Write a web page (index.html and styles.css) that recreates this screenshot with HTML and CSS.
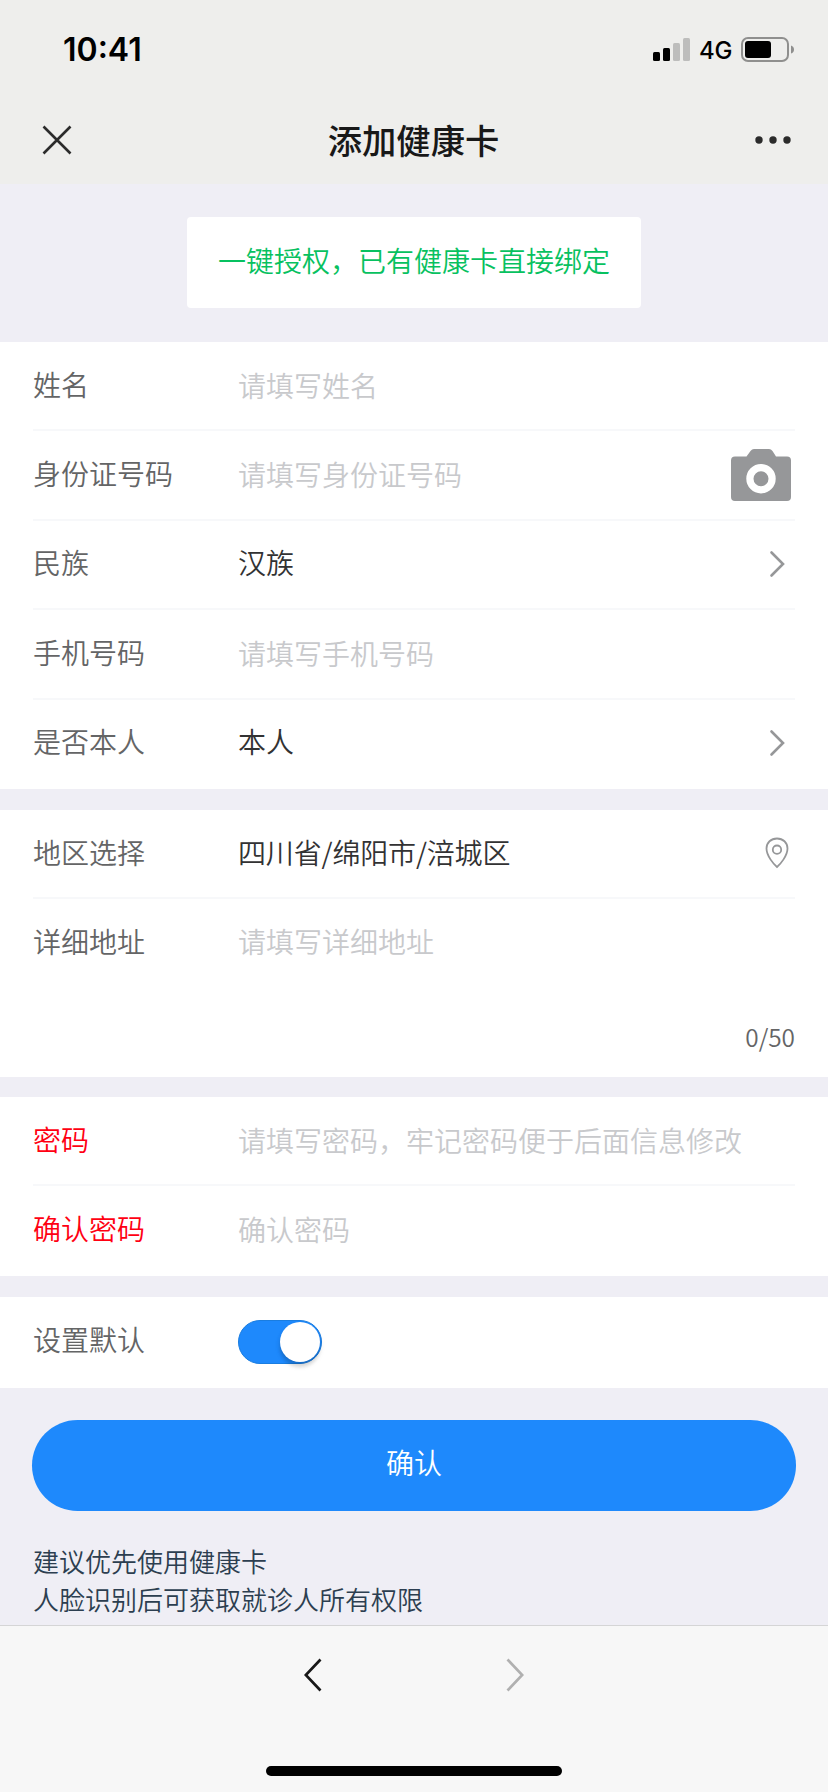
FILE: index.html
```html
<!DOCTYPE html>
<html lang="zh-CN">
<head>
<meta charset="utf-8">
<title>添加健康卡</title>
<link rel="stylesheet" href="styles.css">
</head>
<body>
<div class="phone">
  <header class="top">
    <div class="status">
      <span class="time">10:41</span>
      <div class="indicators">
        <svg class="signal" width="38" height="24" viewBox="0 0 38 24">
          <rect x="0" y="14" width="7" height="9" rx="1.5"/>
          <rect x="10" y="10" width="7" height="13" rx="1.5"/>
          <rect x="20" y="5" width="7" height="18" rx="1.5" fill="#bdbdbc"/>
          <rect x="30" y="0" width="7" height="23" rx="1.5" fill="#bdbdbc"/>
        </svg>
        <span class="network">4G</span>
        <svg class="battery" width="54" height="26" viewBox="0 0 54 26">
          <rect x="1" y="1" width="46" height="23" rx="6" fill="none" stroke="#8f8f8e" stroke-width="2"/>
          <rect x="4" y="4" width="26" height="17" rx="3"/>
          <path d="M50 8.500Q53 9.500 53 12.500T50 16.500Z" fill="#8f8f8e"/>
        </svg>
      </div>
    </div>
    <div class="navbar">
      <svg width="30" height="30" viewBox="0 0 30 30"><path d="M1.500 1.500 28.500 28.500M28.500 1.500 1.500 28.500" fill="none" stroke="#2b2b2b" stroke-width="2.600"/></svg>
      <h1 class="title">添加健康卡</h1>
      <svg width="36" height="8" viewBox="0 0 36 8" fill="#2b2b2b"><circle cx="4" cy="4" r="3.700"/><circle cx="18" cy="4" r="3.700"/><circle cx="32" cy="4" r="3.700"/></svg>
    </div>
  </header>

  <main class="content">
    <button class="authorize">一键授权，已有健康卡直接绑定</button>

    <section class="group">
      <div class="row"><span class="label">姓名</span><span class="value hint">请填写姓名</span></div>
      <div class="row">
        <span class="label">身份证号码</span><span class="value hint">请填写身份证号码</span>
        <svg class="camera" width="60" height="52" viewBox="0 0 60 52"><path fill="#969799" fill-rule="evenodd" d="M4 7.500H15.500L19.500 2Q21 0 23 0H38Q40 0 41.500 2L45 7.500H56Q60 7.500 60 11.500V48Q60 52 56 52H4Q0 52 0 48V11.500Q0 7.500 4 7.500ZM30 15A14.700 14.700 0 1 0 30 44.400A14.700 14.700 0 1 0 30 15ZM30 22.200A7.500 7.500 0 1 1 30 37.200A7.500 7.500 0 1 1 30 22.200Z"/></svg>
      </div>
      <div class="row"><span class="label">民族</span><span class="value">汉族</span>
        <svg class="arrow" width="16" height="28" viewBox="0 0 16 28"><path d="M2.500 2.500 14 14 2.500 25.500"/></svg></div>
      <div class="row"><span class="label">手机号码</span><span class="value hint">请填写手机号码</span></div>
      <div class="row"><span class="label">是否本人</span><span class="value">本人</span>
        <svg class="arrow" width="16" height="28" viewBox="0 0 16 28"><path d="M2.500 2.500 14 14 2.500 25.500"/></svg></div>
    </section>

    <section class="group">
      <div class="row"><span class="label">地区选择</span><span class="value region">四川省/绵阳市/涪城区</span>
        <svg class="pin" width="24" height="32" viewBox="0 0 24 32" fill="none" stroke="#969799" stroke-width="1.800"><path d="M12 30C9 27.500 1.500 19 1.500 11.500C1.500 5.500 6 1.500 12 1.500S22.500 5.500 22.500 11.500C22.500 19 15 27.500 12 30Z"/><circle cx="12" cy="12.700" r="4.200"/></svg></div>
      <div class="row address"><span class="label">详细地址</span><span class="value hint">请填写详细地址</span></div>
      <div class="counter">0/50</div>
    </section>

    <section class="group secret">
      <div class="row"><span class="label required">密码</span><span class="value hint">请填写密码，牢记密码便于后面信息修改</span></div>
      <div class="row"><span class="label required">确认密码</span><span class="value hint">确认密码</span></div>
    </section>

    <section class="group">
      <div class="row default"><span class="label">设置默认</span><span class="switch"><span class="knob"></span></span></div>
    </section>

    <button class="confirm">确认</button>
    <p class="notes">建议优先使用健康卡<br>人脸识别后可获取就诊人所有权限</p>
  </main>

  <footer class="toolbar">
    <div class="history">
      <svg width="18" height="34" viewBox="0 0 18 34"><path d="M16.500 1.500 1.800 17 16.500 32.500" fill="none" stroke="#181818" stroke-width="2.700"/></svg>
      <svg width="18" height="34" viewBox="0 0 18 34"><path d="M1.500 1.500 16.200 17 1.500 32.500" fill="none" stroke="#b0b0b0" stroke-width="2.700"/></svg>
    </div>
    <div class="home"></div>
  </footer>
</div>
</body>
</html>
```
FILE: styles.css
```css
* { box-sizing: border-box; }
body { margin: 0; font-family: "Noto Sans CJK SC", sans-serif; font-weight: 350; }
svg { display: block; flex: none; }
button { border: 0; font: inherit; }

.phone { width: 828px; height: 1792px; display: flex; flex-direction: column; background: #efeef5; overflow: hidden; }

.top { height: 184px; flex: none; background: #eeeeec; }
.status { height: 98px; padding: 0 33px 0 63px; display: flex; align-items: center; justify-content: space-between; }
.time { font: 600 32px Inter, sans-serif; padding-top: 1px; }
.indicators { display: flex; align-items: center; padding-top: 2px; }
.network { font: 500 24px Inter, sans-serif; margin: 1px 9px 0 8px; letter-spacing: -0.4px; }
.navbar { height: 84px; padding: 0 37px 0 42px; display: flex; align-items: center; justify-content: space-between; }
.title { margin: 0 0 2px; font-size: 34.3px; font-weight: 500; line-height: 48px; color: #181818; }

.content { flex: 1; min-height: 0; display: flex; flex-direction: column; }
.authorize { align-self: center; width: 454px; height: 91px; margin: 33px 0 34px; padding: 0 0 5px; border-radius: 4px; background: #fff; color: #07c160; font-size: 28px; }

.group { flex: none; margin-bottom: 21px; padding: 0 33px; background: #fff; }
.row { height: 89.4px; display: flex; align-items: center; border-bottom: 2px solid #f7f8fa; font-size: 28px; line-height: 40px; }
.row:last-child { border-bottom-color: transparent; }
.label { width: 205px; padding-bottom: 4px; color: #646566; }
.required { color: #ff0012; }
.value { flex: 1; padding-bottom: 4px; white-space: nowrap; color: #323233; }
.region { letter-spacing: -0.15px; }
.hint { color: #c8c9cc; padding-bottom: 2px; }
.camera { margin: 0 4px 0 0; }
.arrow { margin-right: 10px; fill: none; stroke: #969799; stroke-width: 2.6; stroke-linecap: round; }
.pin { margin: 0 6px 2px 0; }
.address { border-bottom: 0; }
.address .label, .address .hint { padding-bottom: 6px; }
.counter { height: 88.2px; padding-top: 30px; text-align: right; font-size: 24.400px; line-height: 36px; color: #646566; }
.group:has(.counter) { margin-bottom: 20px; }
.default { height: 91px; }
.group:has(.default) { margin-bottom: 32px; }

.switch { position: relative; width: 84px; height: 44px; margin-top: 1px; border-radius: 22px; border: 1px solid #1a7de0; background: #1e89fc; }
.knob { position: absolute; top: 1px; right: 1px; width: 40px; height: 40px; border-radius: 50%; background: #fff; box-shadow: 0 6px 3px rgba(0, 0, 0, .05), 0 3px 4px rgba(0, 0, 0, .1), 0 4px 6px rgba(0, 0, 0, .08); }

.confirm { flex: none; margin: 0 32px; height: 91px; padding: 0 0 7px; border-radius: 46px; background: #1e89fc; color: #fff; font-size: 28px; }
.notes { margin: 31px 33px 0; font-size: 26px; line-height: 38px; color: #2c3e50; }

.toolbar { height: 167px; flex: none; border-top: 1px solid #d5d5d6; background: #f7f7f7; display: flex; flex-direction: column; align-items: center; justify-content: space-between; padding: 32px 0 16px; }
.history { display: flex; gap: 184px; }
.home { width: 296px; height: 10px; border-radius: 5px; background: #000; }
```
